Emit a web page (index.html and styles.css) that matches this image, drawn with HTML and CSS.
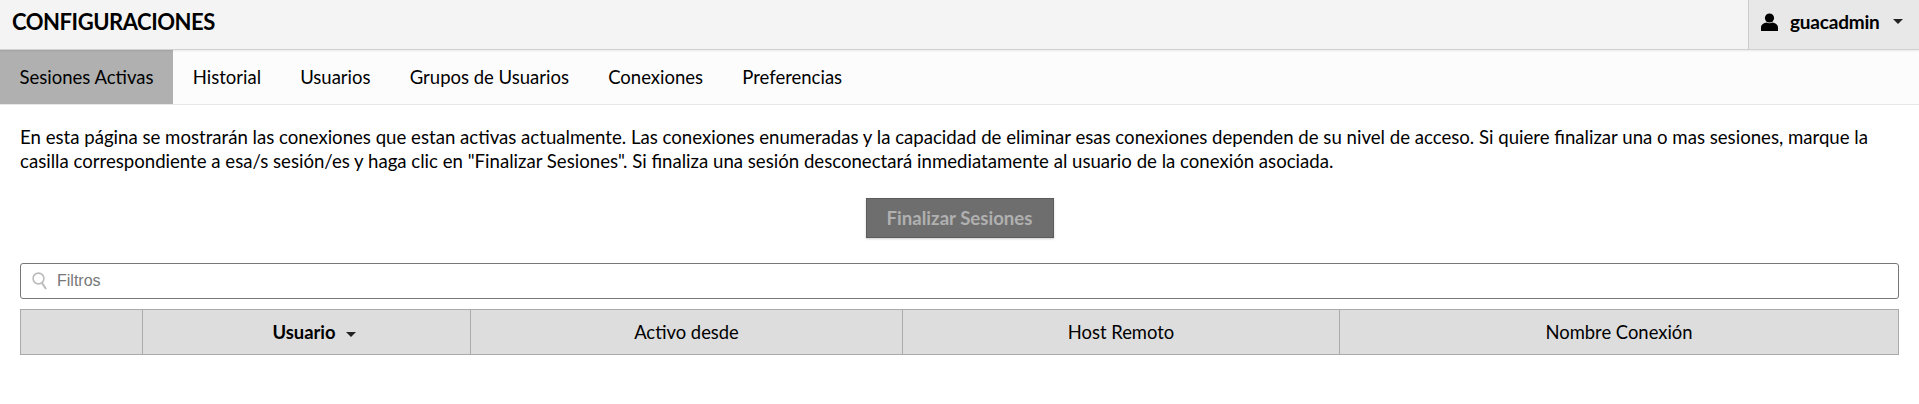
FILE: index.html
```html
<!DOCTYPE html>
<html lang="es">
<head>
    <meta charset="UTF-8">
    <title>Configuraciones</title>
    <link rel="stylesheet" href="styles.css">
</head>
<body>

    <div class="header">
        <h2>CONFIGURACIONES</h2>
        <div class="user_menu">
            <svg class="user_icon" width="17" height="18" viewBox="0 0 17 18">
                <circle cx="8.5" cy="5" r="4.6" fill="#000"/>
                <path d="M0 18V14.5C0 11.5 3 10 5.5 9.5C7 10.6 10 10.6 11.5 9.5C14 10 17 11.5 17 14.5V18Z" fill="#000"/>
            </svg>
            <span class="user_name">guacadmin</span>
            <span class="caret"></span>
        </div>
    </div>

    <div class="tabs">
        <a class="tab current">Sesiones Activas</a>
        <a class="tab">Historial</a>
        <a class="tab">Usuarios</a>
        <a class="tab">Grupos de Usuarios</a>
        <a class="tab">Conexiones</a>
        <a class="tab">Preferencias</a>
    </div>

    <div class="content">
        <p class="help">En esta página se mostrarán las conexiones que estan activas actualmente. Las conexiones enumeradas y la capacidad de eliminar esas conexiones dependen de su nivel de acceso. Si quiere finalizar una o mas sesiones, marque la casilla correspondiente a esa/s sesión/es y haga clic en "Finalizar Sesiones". Si finaliza una sesión desconectará inmediatamente al usuario de la conexión asociada.</p>

        <div class="actions">
            <button class="end_button" disabled>Finalizar Sesiones</button>
        </div>

        <div class="filter">
            <svg class="search_icon" width="16" height="18" viewBox="0 0 16 18">
                <circle cx="6.5" cy="6.5" r="5.4" fill="none" stroke="#bbb" stroke-width="1.6"/>
                <path d="M10 11L14 17" stroke="#bbb" stroke-width="2"/>
            </svg>
            <input class="filter_input" type="text" placeholder="Filtros">
        </div>

        <table class="sessions">
            <thead>
                <tr>
                    <th class="col_check"></th>
                    <th class="col_user sorted">Usuario<span class="caret small"></span></th>
                    <th class="col_since">Activo desde</th>
                    <th class="col_host">Host Remoto</th>
                    <th>Nombre Conexión</th>
                </tr>
            </thead>
        </table>
    </div>

</body>
</html>
```

FILE: styles.css
```css
* {
    margin: 0px;
    padding: 0px;
    box-sizing: border-box;
}

body {
    background-color: #fff;
    color: #000;
    font-family: Lato, "Open Sans", sans-serif;
    font-size: 18.5px;
}

.header {
    display: flex;
    justify-content: space-between;
    align-items: stretch;
    height: 50px;
    background-color: #f4f4f4;
    border-bottom: 1px solid #d0d0d0;
    box-shadow: 0 1px 2px rgba(0, 0, 0, 0.08);
    position: relative;
}

h2 {
    font-size: 22px;
    font-weight: 700;
    letter-spacing: -0.45px;
    line-height: 44px;
    padding-left: 12px;
}

.user_menu {
    display: flex;
    align-items: center;
    width: 171px;
    padding: 0 0 6px 12px;
    background-color: #e8e8e8;
    border-left: 1px solid #ccc;
}

.user_icon {
    margin-right: 12px;
}

.user_name {
    font-weight: 700;
    font-size: 19px;
    letter-spacing: -0.2px;
}

.caret {
    width: 0;
    height: 0;
    margin-left: 13px;
    border-left: 5px solid transparent;
    border-right: 5px solid transparent;
    border-top: 5px solid #222;
}

.caret.small {
    display: inline-block;
    margin-left: 10px;
    vertical-align: middle;
}

.tabs {
    display: flex;
    height: 55px;
    background-color: #fcfcfc;
    border-bottom: 1px solid #e8e8e8;
}

.tab {
    display: flex;
    align-items: center;
    padding: 0 19.6px;
}

.tab.current {
    background-color: #b0b0b0;
}

.content {
    padding: 21px 20px 0;
}

.help {
    font-size: 18.63px;
    line-height: 23.5px;
}

.actions {
    display: flex;
    justify-content: center;
    margin-top: 25px;
}

.end_button {
    width: 188px;
    height: 40px;
    background-color: #6e6e6e;
    border: 1px solid #5c5c5c;
    box-shadow: 0 1px 2px rgba(0, 0, 0, 0.2);
    color: #b0b0b0;
    font-family: inherit;
    font-size: 18.6px;
    font-weight: 700;
}

.filter {
    display: flex;
    align-items: center;
    height: 36px;
    margin-top: 25px;
    padding-left: 11px;
    border: 1px solid #777;
    border-radius: 3px;
}

.search_icon {
    margin-right: 9px;
}

.filter_input {
    flex: 1;
    border: none;
    outline: none;
    font-family: "Liberation Sans", Arial, sans-serif;
    font-size: 16px;
}

.filter_input::placeholder {
    color: #777;
}

.sessions {
    width: 100%;
    margin-top: 10px;
    border-collapse: collapse;
    table-layout: fixed;
}

th {
    height: 45px;
    background-color: #ddd;
    border: 1px solid #aaa;
    font-size: 18.4px;
    font-weight: 400;
}

th.sorted {
    padding-left: 15px;
    font-weight: 700;
}

.col_check {
    width: 122px;
}

.col_user {
    width: 328px;
}

.col_since {
    width: 432px;
}

.col_host {
    width: 437px;
}
```
